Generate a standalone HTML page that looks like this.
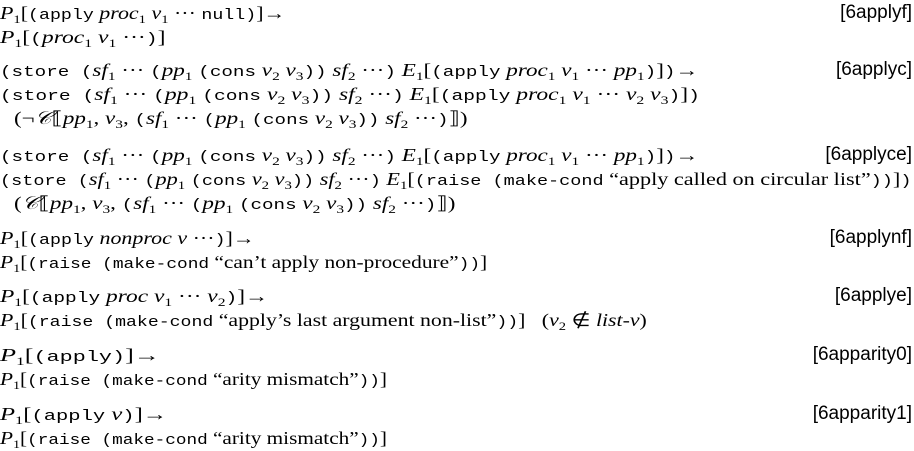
<!DOCTYPE html>
<html style="overflow:hidden;width:914px;height:451px"><head><meta charset="utf-8"><style>
html,body{overflow:hidden}
body{margin:0;width:914px;height:451px;background:#fff;color:#000;position:relative;font-family:"Liberation Serif",serif;font-size:18px}
#w{position:absolute;left:0;top:0;width:914px;height:451px;overflow:hidden}
.l{position:absolute;left:0;white-space:nowrap;line-height:22px;transform-origin:0 50%}
.r{position:absolute;right:2px;white-space:nowrap;line-height:22px;font-family:"Liberation Sans",sans-serif;font-size:19px}
t{font-family:"Liberation Mono",monospace;font-size:15px}
i{font-style:italic}
sub{font-size:12px;vertical-align:-4px;line-height:0}
</style></head><body><div id="w">
<div class="l" style="top:2px"><i>P</i><sub>1</sub>[<t>(apply</t> <i>proc</i><sub>1</sub> <i>v</i><sub>1</sub> ··· <t>null)</t>]→</div>
<div class="r" style="top:2px">[6applyf]</div>
<div class="l" style="top:26px"><i>P</i><sub>1</sub>[<t>(</t><i>proc</i><sub>1</sub> <i>v</i><sub>1</sub> ···<t>)</t>]</div>

<div class="l" style="top:59px"><t>(store (</t><i>sf</i><sub>1</sub> ··· <t>(</t><i>pp</i><sub>1</sub> <t>(cons</t> <i>v</i><sub>2</sub> <i>v</i><sub>3</sub><t>))</t> <i>sf</i><sub>2</sub> ···<t>)</t> <i>E</i><sub>1</sub>[<t>(apply</t> <i>proc</i><sub>1</sub> <i>v</i><sub>1</sub> ··· <i>pp</i><sub>1</sub><t>)</t>]<t>)</t>→</div>
<div class="r" style="top:59px">[6applyc]</div>
<div class="l" style="top:83px"><t>(store (</t><i>sf</i><sub>1</sub> ··· <t>(</t><i>pp</i><sub>1</sub> <t>(cons</t> <i>v</i><sub>2</sub> <i>v</i><sub>3</sub><t>))</t> <i>sf</i><sub>2</sub> ···<t>)</t> <i>E</i><sub>1</sub>[<t>(apply</t> <i>proc</i><sub>1</sub> <i>v</i><sub>1</sub> ··· <i>v</i><sub>2</sub> <i>v</i><sub>3</sub><t>)</t>]<t>)</t></div>
<div class="l" style="top:107px;left:14px">(¬<i>𝒞</i>⟦<i>pp</i><sub>1</sub>, <i>v</i><sub>3</sub>, <t>(</t><i>sf</i><sub>1</sub> ··· <t>(</t><i>pp</i><sub>1</sub> <t>(cons</t> <i>v</i><sub>2</sub> <i>v</i><sub>3</sub><t>))</t> <i>sf</i><sub>2</sub> ···<t>)</t>⟧)</div>

<div class="l" style="top:144px"><t>(store (</t><i>sf</i><sub>1</sub> ··· <t>(</t><i>pp</i><sub>1</sub> <t>(cons</t> <i>v</i><sub>2</sub> <i>v</i><sub>3</sub><t>))</t> <i>sf</i><sub>2</sub> ···<t>)</t> <i>E</i><sub>1</sub>[<t>(apply</t> <i>proc</i><sub>1</sub> <i>v</i><sub>1</sub> ··· <i>pp</i><sub>1</sub><t>)</t>]<t>)</t>→</div>
<div class="r" style="top:144px">[6applyce]</div>
<div class="l" style="top:168px"><t>(store (</t><i>sf</i><sub>1</sub> ··· <t>(</t><i>pp</i><sub>1</sub> <t>(cons</t> <i>v</i><sub>2</sub> <i>v</i><sub>3</sub><t>))</t> <i>sf</i><sub>2</sub> ···<t>)</t> <i>E</i><sub>1</sub>[<t>(raise (make-cond</t> “apply called on circular list”<t>))</t>]<t>)</t></div>
<div class="l" style="top:192px;left:14px">(<i>𝒞</i>⟦<i>pp</i><sub>1</sub>, <i>v</i><sub>3</sub>, <t>(</t><i>sf</i><sub>1</sub> ··· <t>(</t><i>pp</i><sub>1</sub> <t>(cons</t> <i>v</i><sub>2</sub> <i>v</i><sub>3</sub><t>))</t> <i>sf</i><sub>2</sub> ···<t>)</t>⟧)</div>

<div class="l" style="top:227px"><i>P</i><sub>1</sub>[<t>(apply</t> <i>nonproc v</i> ···<t>)</t>]→</div>
<div class="r" style="top:227px">[6applynf]</div>
<div class="l" style="top:251px"><i>P</i><sub>1</sub>[<t>(raise (make-cond</t> “can’t apply non-procedure”<t>))</t>]</div>

<div class="l" style="top:285px"><i>P</i><sub>1</sub>[<t>(apply</t> <i>proc v</i><sub>1</sub> ··· <i>v</i><sub>2</sub><t>)</t>]→</div>
<div class="r" style="top:285px">[6applye]</div>
<div class="l" style="top:309px"><i>P</i><sub>1</sub>[<t>(raise (make-cond</t> “apply’s last argument non-list”<t>))</t>] &nbsp; (<i>v</i><sub>2</sub> ∉ <i>list-v</i>)</div>

<div class="l" style="top:344px"><i>P</i><sub>1</sub>[<t>(apply)</t>]→</div>
<div class="r" style="top:344px">[6apparity0]</div>
<div class="l" style="top:368px"><i>P</i><sub>1</sub>[<t>(raise (make-cond</t> “arity mismatch”<t>))</t>]</div>

<div class="l" style="top:403px"><i>P</i><sub>1</sub>[<t>(apply</t> <i>v</i><t>)</t>]→</div>
<div class="r" style="top:403px">[6apparity1]</div>
<div class="l" style="top:427px"><i>P</i><sub>1</sub>[<t>(raise (make-cond</t> “arity mismatch”<t>))</t>]</div>
</div>
<script>
var W=[285,165,698,700,468,698,912,456,255,487,268,647,160,387,168,387];
var L=document.querySelectorAll('.l');
for(var k=0;k<L.length;k++){var el=L[k];var w=el.scrollWidth;var tw=W[k]-el.offsetLeft;if(w>0)el.style.transform='scaleX('+(tw/w)+')';}
</script>
</body></html>
